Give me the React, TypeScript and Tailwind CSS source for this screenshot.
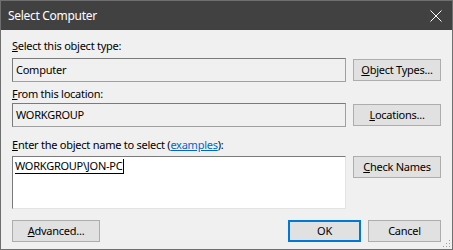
import React from "react";

const font = { fontFamily: '"Noto Sans", "Open Sans", sans-serif' };

function Btn({ children, primary, className }: { children: React.ReactNode; primary?: boolean; className?: string }) {
    return (
        <div
            className={
                "h-[22px] flex items-center justify-center bg-[#e1e1e1] text-[11px] tracking-[-0.25px] text-black border " +
                (primary ? "border-[#0078d7] shadow-[inset_0_0_0_1px_#0078d7]" : "border-[#adadad]") +
                " " +
                (className ?? "")
            }
        >
            {children}
        </div>
    );
}

function SizeGrip() {
    return (
        <svg width="10" height="10" viewBox="0 0 10 10" className="absolute right-[1px] bottom-[1px]">
            {[
                [8, 2],
                [5, 5],
                [8, 5],
                [2, 8],
                [5, 8],
                [8, 8],
            ].map(([x, y], i) => (
                <rect key={i} x={x} y={y} width="1" height="1" fill="#a0a0a0" />
            ))}
        </svg>
    );
}

export default function App() {
    return (
        <div className="w-[453px] h-[250px] flex flex-col border border-[#6f6f6f] bg-[#f0f0f0] relative overflow-hidden" style={font}>
            {/* title bar */}
            <div className="h-[29px] bg-[#414141] flex items-center justify-between pl-[7px] pr-[10px] shrink-0">
                <span className="text-white text-[12px] tracking-[-0.3px] leading-none">Select Computer</span>
                <svg width="12" height="12" viewBox="0 0 12 12">
                    <path d="M0.5 0.5 L11.5 11.5 M11.5 0.5 L0.5 11.5" stroke="#ffffff" strokeWidth="1" />
                </svg>
            </div>

            <div className="flex-1 flex flex-col pl-[11px] pr-[11px] text-[11px] tracking-[-0.25px] text-black">
                {/* object type */}
                <div className="mt-[8px] h-[16px] leading-[16px]">
                    <span className="underline">S</span>elect this object type:
                </div>
                <div className="mt-[4px] flex items-center gap-[7px]">
                    <div className="flex-1 h-[24px] border border-[#a0a0a0] border-t-[#7a7a7a] border-l-[#7a7a7a] bg-[#f0f0f0] flex items-center pl-[3px]">
                        Computer
                    </div>
                    <Btn className="w-[88px]">
                        <span className="underline">O</span>bject Types...
                    </Btn>
                </div>

                {/* location */}
                <div className="mt-[4px] h-[16px] leading-[16px]">
                    <span className="underline">F</span>rom this location:
                </div>
                <div className="mt-[1px] flex items-center gap-[7px]">
                    <div className="flex-1 h-[24px] border border-[#a0a0a0] border-t-[#7a7a7a] border-l-[#7a7a7a] bg-[#f0f0f0] flex items-center pl-[3px]">
                        WORKGROUP
                    </div>
                    <Btn className="w-[88px]">
                        <span className="underline">L</span>ocations...
                    </Btn>
                </div>

                {/* object name */}
                <div className="mt-[10px] h-[16px] leading-[16px]">
                    <span className="underline">E</span>nter the object name to select (
                    <span className="text-[#0066cc] underline">examples</span>):
                </div>
                <div className="mt-[3px] flex items-start gap-[7px]">
                    <div className="flex-1 h-[53px] border border-[#e3e3e3] border-t-[#7a7a7a] border-l-[#7a7a7a] bg-white pl-[2px] pt-[1px]">
                        <span className="inline-flex items-center leading-[15px] border-b border-black">
                            WORKGROUP\JON-PC
                            <span className="inline-block w-[1px] h-[14px] bg-black ml-[1px]" />
                        </span>
                    </div>
                    <Btn className="w-[88px]">
                        <span className="underline">C</span>heck Names
                    </Btn>
                </div>

                {/* footer */}
                <div className="mt-[11px] flex items-center">
                    <Btn className="w-[88px]">
                        <span className="underline">A</span>dvanced...
                    </Btn>
                    <div className="flex-1" />
                    <Btn primary className="w-[73px]">OK</Btn>
                    <Btn className="w-[73px] ml-[7px]">Cancel</Btn>
                </div>
            </div>
            <SizeGrip />
        </div>
    );
}
